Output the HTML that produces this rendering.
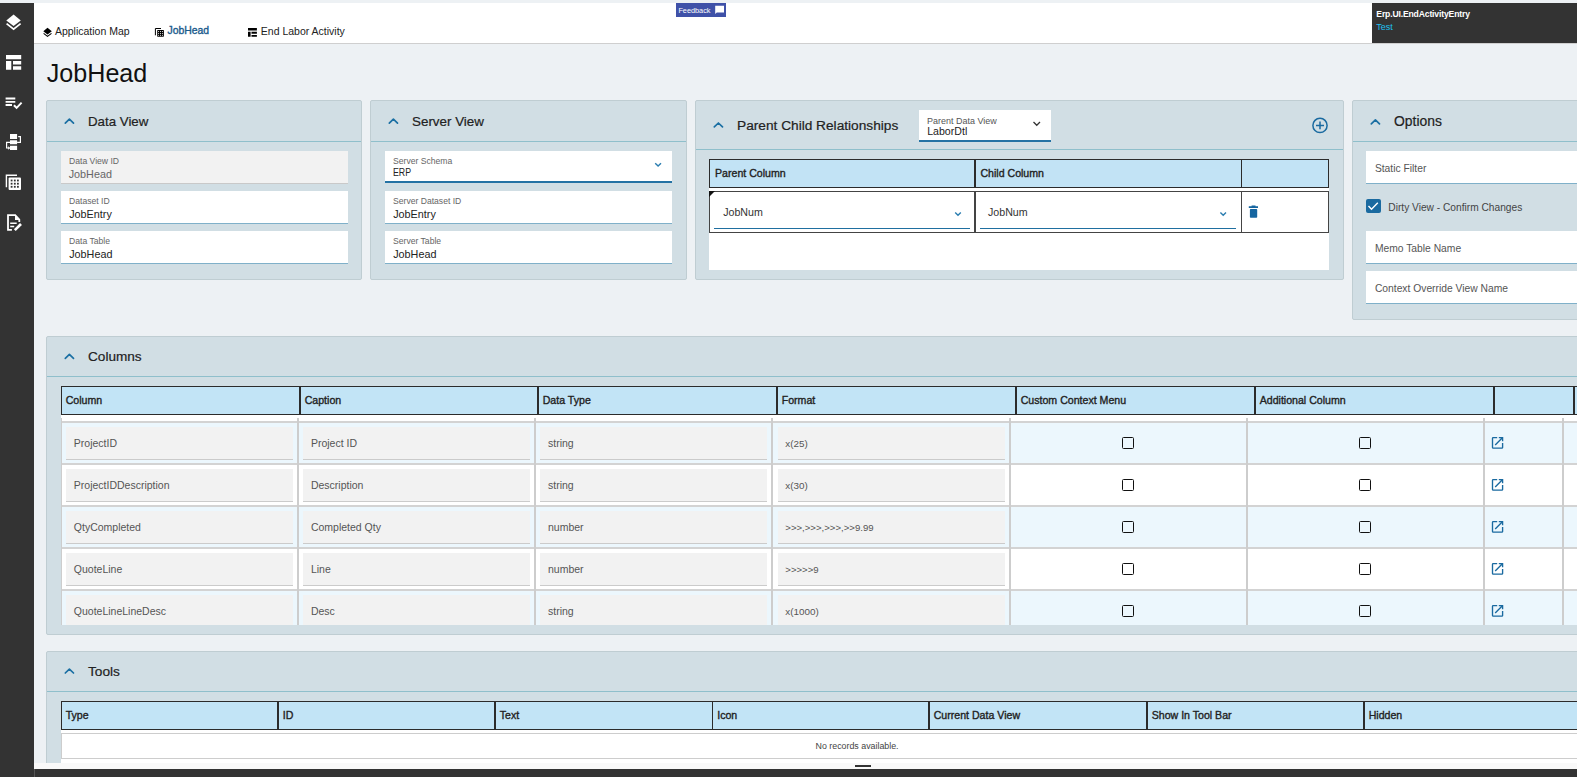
<!DOCTYPE html><html><head><meta charset="utf-8"><style>
html,body{margin:0;padding:0;}
body{width:1577px;height:777px;overflow:hidden;position:relative;background:#edf1f4;font-family:"Liberation Sans", sans-serif;}
.t{position:absolute;white-space:nowrap;}
.b{position:absolute;box-sizing:border-box;}
svg{position:absolute;overflow:visible;}
</style></head><body>
<div class="b" style="left:0px;top:3px;width:34px;height:774px;background:#333;"></div>
<div class="b" style="left:34px;top:3px;width:1543px;height:41px;background:#fff;border-bottom:1px solid #cfcfcf;"></div>
<div class="t" style="left:54.9px;top:26.01px;font-size:10.5px;line-height:10.5px;color:#222;font-weight:400;letter-spacing:0px;">Application Map</div>
<div class="t" style="left:167.5px;top:26.00px;font-size:10.4px;line-height:10.4px;color:#1a5a8c;font-weight:400;letter-spacing:0px;-webkit-text-stroke:0.35px currentColor;">JobHead</div>
<div class="t" style="left:260.8px;top:26.01px;font-size:10.5px;line-height:10.5px;color:#222;font-weight:400;letter-spacing:0px;">End Labor Activity</div>
<div class="b" style="left:676px;top:3px;width:50px;height:14px;background:#3f51a8;"></div>
<div class="t" style="left:678.4px;top:6.72px;font-size:7.3px;line-height:7.3px;color:#fff;font-weight:400;letter-spacing:0px;">Feedback</div>
<div class="b" style="left:1372px;top:3px;width:205px;height:40px;background:#333;"></div>
<div class="t" style="left:1376.3px;top:9.62px;font-size:8.6px;line-height:8.6px;color:#fff;font-weight:700;letter-spacing:-0.15px;">Erp.UI.EndActivityEntry</div>
<div class="t" style="left:1376.3px;top:23.28px;font-size:9.0px;line-height:9.0px;color:#1ec0f0;font-weight:400;letter-spacing:0px;">Test</div>
<div class="t" style="left:46.8px;top:61.25px;font-size:25.1px;line-height:25.1px;color:#111;font-weight:400;letter-spacing:0px;">JobHead</div>
<div class="b" style="left:46px;top:100px;width:316px;height:180px;background:#d1dee4;border:1px solid #bfcdd2;border-radius:2px;"></div>
<div class="b" style="left:47px;top:141px;width:314px;height:1px;background:#8fbfcb;"></div>
<svg style="left:0px;top:0px" width="1577" height="777" viewBox="0 0 1577 777"><polyline points="65.3,123.1 69.4,119.2 73.5,123.1" fill="none" stroke="#1a6fa3" stroke-width="1.7" stroke-linecap="round" stroke-linejoin="round"/></svg>
<div class="t" style="left:88.0px;top:115.04px;font-size:13.3px;line-height:13.3px;color:#222;font-weight:400;letter-spacing:0px;-webkit-text-stroke:0.2px #222;">Data View</div>
<div class="b" style="left:61px;top:151px;width:287px;height:33px;background:#f2f2f2;border-bottom:1px solid #c9c9c9;"></div>
<div class="t" style="left:68.7px;top:156.06px;font-size:9.5px;line-height:9.5px;color:#666;font-weight:400;letter-spacing:0px;transform:scaleX(0.905);transform-origin:0 0;">Data View ID</div>
<div class="t" style="left:68.7px;top:168.96px;font-size:10.8px;line-height:10.8px;color:#666;font-weight:400;letter-spacing:0px;">JobHead</div>
<div class="b" style="left:61px;top:191px;width:287px;height:33px;background:#fff;border-bottom:1px solid #7fb0c9;"></div>
<div class="t" style="left:69.2px;top:195.86px;font-size:9.5px;line-height:9.5px;color:#666;font-weight:400;letter-spacing:0px;transform:scaleX(0.905);transform-origin:0 0;">Dataset ID</div>
<div class="t" style="left:69.2px;top:208.86px;font-size:10.8px;line-height:10.8px;color:#222;font-weight:400;letter-spacing:0px;">JobEntry</div>
<div class="b" style="left:61px;top:231px;width:287px;height:33px;background:#fff;border-bottom:1px solid #7fb0c9;"></div>
<div class="t" style="left:69.2px;top:235.86px;font-size:9.5px;line-height:9.5px;color:#666;font-weight:400;letter-spacing:0px;transform:scaleX(0.905);transform-origin:0 0;">Data Table</div>
<div class="t" style="left:69.2px;top:248.86px;font-size:10.8px;line-height:10.8px;color:#222;font-weight:400;letter-spacing:0px;">JobHead</div>
<div class="b" style="left:370px;top:100px;width:317px;height:180px;background:#d1dee4;border:1px solid #bfcdd2;border-radius:2px;"></div>
<div class="b" style="left:371px;top:141px;width:315px;height:1px;background:#8fbfcb;"></div>
<svg style="left:0px;top:0px" width="1577" height="777" viewBox="0 0 1577 777"><polyline points="389.3,123.1 393.4,119.2 397.5,123.1" fill="none" stroke="#1a6fa3" stroke-width="1.7" stroke-linecap="round" stroke-linejoin="round"/></svg>
<div class="t" style="left:412.0px;top:114.96px;font-size:13.4px;line-height:13.4px;color:#222;font-weight:400;letter-spacing:0px;-webkit-text-stroke:0.2px #222;">Server View</div>
<div class="b" style="left:385px;top:151px;width:287px;height:32px;background:#fff;border-bottom:2px solid #2472a4;"></div>
<div class="t" style="left:393.2px;top:156.16px;font-size:9.5px;line-height:9.5px;color:#666;font-weight:400;letter-spacing:0px;transform:scaleX(0.905);transform-origin:0 0;">Server Schema</div>
<div class="t" style="left:393.2px;top:168.03px;font-size:10.0px;line-height:10.0px;color:#222;font-weight:400;letter-spacing:0px;transform:scaleX(0.88);transform-origin:0 0;">ERP</div>
<svg style="left:0px;top:0px" width="1577" height="777" viewBox="0 0 1577 777"><polyline points="655.2,163.2 658.1,166.1 661.0,163.2" fill="none" stroke="#2a7db0" stroke-width="1.4"/></svg>
<div class="b" style="left:385px;top:191px;width:287px;height:33px;background:#fff;border-bottom:1px solid #7fb0c9;"></div>
<div class="t" style="left:393.2px;top:195.86px;font-size:9.5px;line-height:9.5px;color:#666;font-weight:400;letter-spacing:0px;transform:scaleX(0.905);transform-origin:0 0;">Server Dataset ID</div>
<div class="t" style="left:393.2px;top:208.86px;font-size:10.8px;line-height:10.8px;color:#222;font-weight:400;letter-spacing:0px;">JobEntry</div>
<div class="b" style="left:385px;top:231px;width:287px;height:33px;background:#fff;border-bottom:1px solid #7fb0c9;"></div>
<div class="t" style="left:393.2px;top:235.86px;font-size:9.5px;line-height:9.5px;color:#666;font-weight:400;letter-spacing:0px;transform:scaleX(0.905);transform-origin:0 0;">Server Table</div>
<div class="t" style="left:393.2px;top:248.86px;font-size:10.8px;line-height:10.8px;color:#222;font-weight:400;letter-spacing:0px;">JobHead</div>
<div class="b" style="left:695px;top:100px;width:649px;height:180px;background:#d1dee4;border:1px solid #bfcdd2;border-radius:2px;"></div>
<div class="b" style="left:696px;top:149px;width:647px;height:1px;background:#8fbfcb;"></div>
<svg style="left:0px;top:0px" width="1577" height="777" viewBox="0 0 1577 777"><polyline points="714.3,126.9 718.4,123.0 722.5,126.9" fill="none" stroke="#1a6fa3" stroke-width="1.7" stroke-linecap="round" stroke-linejoin="round"/></svg>
<div class="t" style="left:737.0px;top:118.50px;font-size:13.7px;line-height:13.7px;color:#222;font-weight:400;letter-spacing:0px;-webkit-text-stroke:0.2px #222;">Parent Child Relationships</div>
<div class="b" style="left:919px;top:110px;width:132px;height:32px;background:#fff;border-bottom:2px solid #2472a4;"></div>
<div class="t" style="left:927.2px;top:115.69px;font-size:9.7px;line-height:9.7px;color:#555;font-weight:400;letter-spacing:0px;transform:scaleX(0.927);transform-origin:0 0;">Parent Data View</div>
<div class="t" style="left:927.2px;top:126.23px;font-size:10.6px;line-height:10.6px;color:#222;font-weight:400;letter-spacing:0px;">LaborDtl</div>
<svg style="left:0px;top:0px" width="1577" height="777" viewBox="0 0 1577 777"><polyline points="1033.5,122 1036.75,125.25 1040.0,122" fill="none" stroke="#333" stroke-width="1.3"/></svg>
<svg style="left:0px;top:0px" width="1577" height="777" viewBox="0 0 1577 777"><circle cx="1320" cy="125.4" r="7.1" fill="none" stroke="#1a6aa0" stroke-width="1.5"/><path d="M1316 125.4h8M1320 121.6v7.6" stroke="#1a6aa0" stroke-width="1.5"/></svg>
<div class="b" style="left:709px;top:188px;width:620px;height:82px;background:#fff;"></div>
<div class="b" style="left:709px;top:159px;width:620px;height:29px;background:#c2e3f5;border:1.2px solid #2b2b2b;"></div>
<div class="b" style="left:974px;top:159px;width:1.5px;height:29px;background:#2b2b2b;"></div>
<div class="b" style="left:1240.5px;top:159px;width:1.5px;height:29px;background:#2b2b2b;"></div>
<div class="t" style="left:715.0px;top:167.93px;font-size:10.6px;line-height:10.6px;color:#222;font-weight:400;letter-spacing:0px;-webkit-text-stroke:0.35px currentColor;">Parent Column</div>
<div class="t" style="left:980.4px;top:167.93px;font-size:10.6px;line-height:10.6px;color:#222;font-weight:400;letter-spacing:0px;-webkit-text-stroke:0.35px currentColor;">Child Column</div>
<div class="b" style="left:709px;top:191px;width:620px;height:42px;border:1.2px solid #444;"></div>
<div class="b" style="left:974px;top:191px;width:1.5px;height:42px;background:#444;"></div>
<div class="b" style="left:1240.5px;top:191px;width:1.5px;height:42px;background:#444;"></div>
<svg style="left:0px;top:0px" width="1577" height="777" viewBox="0 0 1577 777"><path d="M709 191h6l-6 6z" fill="#111"/></svg>
<div class="b" style="left:714px;top:228px;width:256px;height:1px;background:#1f6fa0;"></div>
<div class="t" style="left:723.2px;top:206.78px;font-size:10.65px;line-height:10.65px;color:#333;font-weight:400;letter-spacing:0px;">JobNum</div>
<svg style="left:0px;top:0px" width="1577" height="777" viewBox="0 0 1577 777"><polyline points="955.2,212.4 958.0,215.20000000000002 960.8000000000001,212.4" fill="none" stroke="#2a7db0" stroke-width="1.4"/></svg>
<div class="b" style="left:980px;top:228px;width:256px;height:1px;background:#1f6fa0;"></div>
<div class="t" style="left:988.0px;top:206.78px;font-size:10.65px;line-height:10.65px;color:#333;font-weight:400;letter-spacing:0px;">JobNum</div>
<svg style="left:0px;top:0px" width="1577" height="777" viewBox="0 0 1577 777"><polyline points="1220.4,212.4 1223.2,215.20000000000002 1226.0,212.4" fill="none" stroke="#2a7db0" stroke-width="1.4"/></svg>
<svg style="left:0px;top:0px" width="1577" height="777" viewBox="0 0 1577 777"><path d="M1248.8 206.3h9.2v1.6h-9.2z M1251.6 205.6h3.9v1.2h-3.9z" fill="#1565a0"/><rect x="1249.9" y="209" width="7.3" height="8.8" rx="0.8" fill="#1565a0"/></svg>
<div class="b" style="left:1352px;top:100px;width:240px;height:220px;background:#d1dee4;border:1px solid #bfcdd2;border-radius:2px;"></div>
<div class="b" style="left:1353px;top:141px;width:238px;height:1px;background:#8fbfcb;"></div>
<svg style="left:0px;top:0px" width="1577" height="777" viewBox="0 0 1577 777"><polyline points="1371.3,123.8 1375.4,119.9 1379.5,123.8" fill="none" stroke="#1a6fa3" stroke-width="1.7" stroke-linecap="round" stroke-linejoin="round"/></svg>
<div class="t" style="left:1394.0px;top:115.23px;font-size:13.9px;line-height:13.9px;color:#222;font-weight:400;letter-spacing:0px;-webkit-text-stroke:0.2px #222;">Options</div>
<div class="b" style="left:1366px;top:151px;width:240px;height:33px;background:#fff;border-bottom:1px solid #7fb0c9;"></div>
<div class="t" style="left:1374.9px;top:164.28px;font-size:10.3px;line-height:10.3px;color:#555;font-weight:400;letter-spacing:0px;">Static Filter</div>
<div class="b" style="left:1366px;top:199px;width:15px;height:14px;background:#1a6aa0;border-radius:2px;"></div>
<svg style="left:0px;top:0px" width="1577" height="777" viewBox="0 0 1577 777"><polyline points="1368.5,206 1371.5,209.2 1377.8,202.8" fill="none" stroke="#fff" stroke-width="1.4"/></svg>
<div class="t" style="left:1388.3px;top:202.57px;font-size:10.2px;line-height:10.2px;color:#444;font-weight:400;letter-spacing:0px;">Dirty View - Confirm Changes</div>
<div class="b" style="left:1366px;top:231px;width:240px;height:33px;background:#fff;border-bottom:1px solid #7fb0c9;"></div>
<div class="t" style="left:1374.9px;top:244.28px;font-size:10.3px;line-height:10.3px;color:#555;font-weight:400;letter-spacing:0px;">Memo Table Name</div>
<div class="b" style="left:1366px;top:271px;width:240px;height:33px;background:#fff;border-bottom:1px solid #7fb0c9;"></div>
<div class="t" style="left:1374.9px;top:284.28px;font-size:10.3px;line-height:10.3px;color:#555;font-weight:400;letter-spacing:0px;">Context Override View Name</div>
<div class="b" style="left:46px;top:336px;width:1560px;height:299px;background:#d1dee4;border:1px solid #bfcdd2;border-radius:2px;"></div>
<div class="b" style="left:47px;top:376px;width:1558px;height:1px;background:#8fbfcb;"></div>
<svg style="left:0px;top:0px" width="1577" height="777" viewBox="0 0 1577 777"><polyline points="65.3,358.3 69.4,354.4 73.5,358.3" fill="none" stroke="#1a6fa3" stroke-width="1.7" stroke-linecap="round" stroke-linejoin="round"/></svg>
<div class="t" style="left:88.0px;top:349.99px;font-size:13.6px;line-height:13.6px;color:#222;font-weight:400;letter-spacing:0px;-webkit-text-stroke:0.2px #222;">Columns</div>
<div class="b" style="left:61px;top:414px;width:1540px;height:211px;background:#fff;"></div>
<div class="b" style="left:61px;top:386px;width:1540px;height:29px;background:#c2e4f6;border-top:1.5px solid #2b2b2b;border-bottom:1.5px solid #2b2b2b;border-left:1.5px solid #2b2b2b;"></div>
<div class="b" style="left:299.25px;top:386px;width:1.5px;height:29px;background:#2b2b2b;"></div>
<div class="b" style="left:537.25px;top:386px;width:1.5px;height:29px;background:#2b2b2b;"></div>
<div class="b" style="left:776.25px;top:386px;width:1.5px;height:29px;background:#2b2b2b;"></div>
<div class="b" style="left:1015.25px;top:386px;width:1.5px;height:29px;background:#2b2b2b;"></div>
<div class="b" style="left:1254.25px;top:386px;width:1.5px;height:29px;background:#2b2b2b;"></div>
<div class="b" style="left:1493.25px;top:386px;width:1.5px;height:29px;background:#2b2b2b;"></div>
<div class="b" style="left:1573.25px;top:386px;width:1.5px;height:29px;background:#2b2b2b;"></div>
<div class="t" style="left:65.7px;top:395.43px;font-size:10.6px;line-height:10.6px;color:#222;font-weight:400;letter-spacing:0px;-webkit-text-stroke:0.35px currentColor;">Column</div>
<div class="t" style="left:304.7px;top:395.43px;font-size:10.6px;line-height:10.6px;color:#222;font-weight:400;letter-spacing:0px;-webkit-text-stroke:0.35px currentColor;">Caption</div>
<div class="t" style="left:542.7px;top:395.43px;font-size:10.6px;line-height:10.6px;color:#222;font-weight:400;letter-spacing:0px;-webkit-text-stroke:0.35px currentColor;">Data Type</div>
<div class="t" style="left:781.7px;top:395.43px;font-size:10.6px;line-height:10.6px;color:#222;font-weight:400;letter-spacing:0px;-webkit-text-stroke:0.35px currentColor;">Format</div>
<div class="t" style="left:1020.7px;top:395.43px;font-size:10.6px;line-height:10.6px;color:#222;font-weight:400;letter-spacing:0px;-webkit-text-stroke:0.35px currentColor;">Custom Context Menu</div>
<div class="t" style="left:1259.7px;top:395.43px;font-size:10.6px;line-height:10.6px;color:#222;font-weight:400;letter-spacing:0px;-webkit-text-stroke:0.35px currentColor;">Additional Column</div>
<div class="b" style="left:61px;top:421px;width:1540px;height:42px;background:#ecf7fd;border-top:2px solid #d3d3d3;"></div>
<div class="b" style="left:66px;top:427px;width:226.5px;height:33px;background:#f2f2f2;border-bottom:1.2px solid #cbcbcb;"></div>
<div class="t" style="left:73.8px;top:438.01px;font-size:10.5px;line-height:10.5px;color:#555;font-weight:400;letter-spacing:0px;">ProjectID</div>
<div class="b" style="left:303.09999999999997px;top:427px;width:226.50000000000006px;height:33px;background:#f2f2f2;border-bottom:1.2px solid #cbcbcb;"></div>
<div class="t" style="left:310.9px;top:438.01px;font-size:10.5px;line-height:10.5px;color:#555;font-weight:400;letter-spacing:0px;">Project ID</div>
<div class="b" style="left:540.2px;top:427px;width:226.69999999999993px;height:33px;background:#f2f2f2;border-bottom:1.2px solid #cbcbcb;"></div>
<div class="t" style="left:548.0px;top:438.01px;font-size:10.5px;line-height:10.5px;color:#555;font-weight:400;letter-spacing:0px;">string</div>
<div class="b" style="left:777.5px;top:427px;width:227.39999999999998px;height:33px;background:#f2f2f2;border-bottom:1.2px solid #cbcbcb;"></div>
<div class="t" style="left:785.3px;top:438.52px;font-size:9.9px;line-height:9.9px;color:#555;font-weight:400;letter-spacing:0px;">x(25)</div>
<div class="b" style="left:1122.0500000000002px;top:437px;width:12.2px;height:12.2px;border:1.4px solid #111;border-radius:1.5px;"></div>
<div class="b" style="left:1358.9px;top:437px;width:12.2px;height:12.2px;border:1.4px solid #111;border-radius:1.5px;"></div>
<svg style="left:0px;top:0px" width="1577" height="777" viewBox="0 0 1577 777"><path d="M1497.2 437.6H1493.2Q1492.5 437.6 1492.5 438.3V447.4Q1492.5 448.1 1493.2 448.1H1501.9Q1502.6 448.1 1502.6 447.4V442.9" fill="none" stroke="#1a6aa0" stroke-width="1.35"/><path d="M1498.8 437.6H1502.6V441.3M1502.4 437.8L1495.2 445.0" fill="none" stroke="#1a6aa0" stroke-width="1.35"/></svg>
<div class="b" style="left:61px;top:463px;width:1540px;height:42px;background:#fff;border-top:2px solid #d3d3d3;"></div>
<div class="b" style="left:66px;top:469px;width:226.5px;height:33px;background:#f2f2f2;border-bottom:1.2px solid #cbcbcb;"></div>
<div class="t" style="left:73.8px;top:480.01px;font-size:10.5px;line-height:10.5px;color:#555;font-weight:400;letter-spacing:0px;">ProjectIDDescription</div>
<div class="b" style="left:303.09999999999997px;top:469px;width:226.50000000000006px;height:33px;background:#f2f2f2;border-bottom:1.2px solid #cbcbcb;"></div>
<div class="t" style="left:310.9px;top:480.01px;font-size:10.5px;line-height:10.5px;color:#555;font-weight:400;letter-spacing:0px;">Description</div>
<div class="b" style="left:540.2px;top:469px;width:226.69999999999993px;height:33px;background:#f2f2f2;border-bottom:1.2px solid #cbcbcb;"></div>
<div class="t" style="left:548.0px;top:480.01px;font-size:10.5px;line-height:10.5px;color:#555;font-weight:400;letter-spacing:0px;">string</div>
<div class="b" style="left:777.5px;top:469px;width:227.39999999999998px;height:33px;background:#f2f2f2;border-bottom:1.2px solid #cbcbcb;"></div>
<div class="t" style="left:785.3px;top:480.52px;font-size:9.9px;line-height:9.9px;color:#555;font-weight:400;letter-spacing:0px;">x(30)</div>
<div class="b" style="left:1122.0500000000002px;top:479px;width:12.2px;height:12.2px;border:1.4px solid #111;border-radius:1.5px;"></div>
<div class="b" style="left:1358.9px;top:479px;width:12.2px;height:12.2px;border:1.4px solid #111;border-radius:1.5px;"></div>
<svg style="left:0px;top:0px" width="1577" height="777" viewBox="0 0 1577 777"><path d="M1497.2 479.6H1493.2Q1492.5 479.6 1492.5 480.3V489.4Q1492.5 490.1 1493.2 490.1H1501.9Q1502.6 490.1 1502.6 489.4V484.9" fill="none" stroke="#1a6aa0" stroke-width="1.35"/><path d="M1498.8 479.6H1502.6V483.3M1502.4 479.8L1495.2 487.0" fill="none" stroke="#1a6aa0" stroke-width="1.35"/></svg>
<div class="b" style="left:61px;top:505px;width:1540px;height:42px;background:#ecf7fd;border-top:2px solid #d3d3d3;"></div>
<div class="b" style="left:66px;top:511px;width:226.5px;height:33px;background:#f2f2f2;border-bottom:1.2px solid #cbcbcb;"></div>
<div class="t" style="left:73.8px;top:522.01px;font-size:10.5px;line-height:10.5px;color:#555;font-weight:400;letter-spacing:0px;">QtyCompleted</div>
<div class="b" style="left:303.09999999999997px;top:511px;width:226.50000000000006px;height:33px;background:#f2f2f2;border-bottom:1.2px solid #cbcbcb;"></div>
<div class="t" style="left:310.9px;top:522.01px;font-size:10.5px;line-height:10.5px;color:#555;font-weight:400;letter-spacing:0px;">Completed Qty</div>
<div class="b" style="left:540.2px;top:511px;width:226.69999999999993px;height:33px;background:#f2f2f2;border-bottom:1.2px solid #cbcbcb;"></div>
<div class="t" style="left:548.0px;top:522.01px;font-size:10.5px;line-height:10.5px;color:#555;font-weight:400;letter-spacing:0px;">number</div>
<div class="b" style="left:777.5px;top:511px;width:227.39999999999998px;height:33px;background:#f2f2f2;border-bottom:1.2px solid #cbcbcb;"></div>
<div class="t" style="left:785.3px;top:522.77px;font-size:9.6px;line-height:9.6px;color:#555;font-weight:400;letter-spacing:0px;">&gt;&gt;&gt;,&gt;&gt;&gt;,&gt;&gt;&gt;,&gt;&gt;9.99</div>
<div class="b" style="left:1122.0500000000002px;top:521px;width:12.2px;height:12.2px;border:1.4px solid #111;border-radius:1.5px;"></div>
<div class="b" style="left:1358.9px;top:521px;width:12.2px;height:12.2px;border:1.4px solid #111;border-radius:1.5px;"></div>
<svg style="left:0px;top:0px" width="1577" height="777" viewBox="0 0 1577 777"><path d="M1497.2 521.6H1493.2Q1492.5 521.6 1492.5 522.3V531.4Q1492.5 532.1 1493.2 532.1H1501.9Q1502.6 532.1 1502.6 531.4V526.9" fill="none" stroke="#1a6aa0" stroke-width="1.35"/><path d="M1498.8 521.6H1502.6V525.3M1502.4 521.8L1495.2 529.0" fill="none" stroke="#1a6aa0" stroke-width="1.35"/></svg>
<div class="b" style="left:61px;top:547px;width:1540px;height:42px;background:#fff;border-top:2px solid #d3d3d3;"></div>
<div class="b" style="left:66px;top:553px;width:226.5px;height:33px;background:#f2f2f2;border-bottom:1.2px solid #cbcbcb;"></div>
<div class="t" style="left:73.8px;top:564.01px;font-size:10.5px;line-height:10.5px;color:#555;font-weight:400;letter-spacing:0px;">QuoteLine</div>
<div class="b" style="left:303.09999999999997px;top:553px;width:226.50000000000006px;height:33px;background:#f2f2f2;border-bottom:1.2px solid #cbcbcb;"></div>
<div class="t" style="left:310.9px;top:564.01px;font-size:10.5px;line-height:10.5px;color:#555;font-weight:400;letter-spacing:0px;">Line</div>
<div class="b" style="left:540.2px;top:553px;width:226.69999999999993px;height:33px;background:#f2f2f2;border-bottom:1.2px solid #cbcbcb;"></div>
<div class="t" style="left:548.0px;top:564.01px;font-size:10.5px;line-height:10.5px;color:#555;font-weight:400;letter-spacing:0px;">number</div>
<div class="b" style="left:777.5px;top:553px;width:227.39999999999998px;height:33px;background:#f2f2f2;border-bottom:1.2px solid #cbcbcb;"></div>
<div class="t" style="left:785.3px;top:564.77px;font-size:9.6px;line-height:9.6px;color:#555;font-weight:400;letter-spacing:0px;">&gt;&gt;&gt;&gt;&gt;9</div>
<div class="b" style="left:1122.0500000000002px;top:563px;width:12.2px;height:12.2px;border:1.4px solid #111;border-radius:1.5px;"></div>
<div class="b" style="left:1358.9px;top:563px;width:12.2px;height:12.2px;border:1.4px solid #111;border-radius:1.5px;"></div>
<svg style="left:0px;top:0px" width="1577" height="777" viewBox="0 0 1577 777"><path d="M1497.2 563.6H1493.2Q1492.5 563.6 1492.5 564.3V573.4Q1492.5 574.1 1493.2 574.1H1501.9Q1502.6 574.1 1502.6 573.4V568.9" fill="none" stroke="#1a6aa0" stroke-width="1.35"/><path d="M1498.8 563.6H1502.6V567.3M1502.4 563.8L1495.2 571.0" fill="none" stroke="#1a6aa0" stroke-width="1.35"/></svg>
<div class="b" style="left:61px;top:589px;width:1540px;height:36px;background:#ecf7fd;border-top:2px solid #d3d3d3;"></div>
<div class="b" style="left:66px;top:595px;width:226.5px;height:30px;background:#f2f2f2;"></div>
<div class="t" style="left:73.8px;top:606.01px;font-size:10.5px;line-height:10.5px;color:#555;font-weight:400;letter-spacing:0px;">QuoteLineLineDesc</div>
<div class="b" style="left:303.09999999999997px;top:595px;width:226.50000000000006px;height:30px;background:#f2f2f2;"></div>
<div class="t" style="left:310.9px;top:606.01px;font-size:10.5px;line-height:10.5px;color:#555;font-weight:400;letter-spacing:0px;">Desc</div>
<div class="b" style="left:540.2px;top:595px;width:226.69999999999993px;height:30px;background:#f2f2f2;"></div>
<div class="t" style="left:548.0px;top:606.01px;font-size:10.5px;line-height:10.5px;color:#555;font-weight:400;letter-spacing:0px;">string</div>
<div class="b" style="left:777.5px;top:595px;width:227.39999999999998px;height:30px;background:#f2f2f2;"></div>
<div class="t" style="left:785.3px;top:606.52px;font-size:9.9px;line-height:9.9px;color:#555;font-weight:400;letter-spacing:0px;">x(1000)</div>
<div class="b" style="left:1122.0500000000002px;top:605px;width:12.2px;height:12.2px;border:1.4px solid #111;border-radius:1.5px;"></div>
<div class="b" style="left:1358.9px;top:605px;width:12.2px;height:12.2px;border:1.4px solid #111;border-radius:1.5px;"></div>
<svg style="left:0px;top:0px" width="1577" height="777" viewBox="0 0 1577 777"><path d="M1497.2 605.6H1493.2Q1492.5 605.6 1492.5 606.3V615.4Q1492.5 616.1 1493.2 616.1H1501.9Q1502.6 616.1 1502.6 615.4V610.9" fill="none" stroke="#1a6aa0" stroke-width="1.35"/><path d="M1498.8 605.6H1502.6V609.3M1502.4 605.8L1495.2 613.0" fill="none" stroke="#1a6aa0" stroke-width="1.35"/></svg>
<div class="b" style="left:61px;top:418px;width:1.2px;height:207px;background:#cdcdcd;"></div>
<div class="b" style="left:296.9px;top:418px;width:2px;height:207px;background:#cdcdcd;"></div>
<div class="b" style="left:534.0px;top:418px;width:2px;height:207px;background:#cdcdcd;"></div>
<div class="b" style="left:771.3px;top:418px;width:2px;height:207px;background:#cdcdcd;"></div>
<div class="b" style="left:1009.3px;top:418px;width:2px;height:207px;background:#cdcdcd;"></div>
<div class="b" style="left:1246.0px;top:418px;width:2px;height:207px;background:#cdcdcd;"></div>
<div class="b" style="left:1483.0px;top:418px;width:2px;height:207px;background:#cdcdcd;"></div>
<div class="b" style="left:1561.7px;top:418px;width:2px;height:207px;background:#cdcdcd;"></div>
<div class="b" style="left:46px;top:651px;width:1560px;height:140px;background:#d1dee4;border:1px solid #bfcdd2;border-radius:2px;"></div>
<div class="b" style="left:47px;top:691px;width:1558px;height:1px;background:#8fbfcb;"></div>
<svg style="left:0px;top:0px" width="1577" height="777" viewBox="0 0 1577 777"><polyline points="65.3,673.0 69.4,669.1 73.5,673.0" fill="none" stroke="#1a6fa3" stroke-width="1.7" stroke-linecap="round" stroke-linejoin="round"/></svg>
<div class="t" style="left:88.0px;top:664.60px;font-size:13.7px;line-height:13.7px;color:#222;font-weight:400;letter-spacing:0px;-webkit-text-stroke:0.2px #222;">Tools</div>
<div class="b" style="left:61px;top:729px;width:1540px;height:34px;background:#fff;"></div>
<div class="b" style="left:61px;top:701px;width:1540px;height:29px;background:#c2e4f6;border-top:1.5px solid #2b2b2b;border-bottom:1.5px solid #2b2b2b;border-left:1.5px solid #2b2b2b;"></div>
<div class="b" style="left:277.25px;top:701px;width:1.5px;height:29px;background:#2b2b2b;"></div>
<div class="b" style="left:494.25px;top:701px;width:1.5px;height:29px;background:#2b2b2b;"></div>
<div class="b" style="left:711.75px;top:701px;width:1.5px;height:29px;background:#2b2b2b;"></div>
<div class="b" style="left:928.25px;top:701px;width:1.5px;height:29px;background:#2b2b2b;"></div>
<div class="b" style="left:1146.25px;top:701px;width:1.5px;height:29px;background:#2b2b2b;"></div>
<div class="b" style="left:1363.25px;top:701px;width:1.5px;height:29px;background:#2b2b2b;"></div>
<div class="t" style="left:65.7px;top:710.43px;font-size:10.6px;line-height:10.6px;color:#222;font-weight:400;letter-spacing:0px;-webkit-text-stroke:0.35px currentColor;">Type</div>
<div class="t" style="left:282.7px;top:710.43px;font-size:10.6px;line-height:10.6px;color:#222;font-weight:400;letter-spacing:0px;-webkit-text-stroke:0.35px currentColor;">ID</div>
<div class="t" style="left:499.7px;top:710.43px;font-size:10.6px;line-height:10.6px;color:#222;font-weight:400;letter-spacing:0px;-webkit-text-stroke:0.35px currentColor;">Text</div>
<div class="t" style="left:717.2px;top:710.43px;font-size:10.6px;line-height:10.6px;color:#222;font-weight:400;letter-spacing:0px;-webkit-text-stroke:0.35px currentColor;">Icon</div>
<div class="t" style="left:933.7px;top:710.43px;font-size:10.6px;line-height:10.6px;color:#222;font-weight:400;letter-spacing:0px;-webkit-text-stroke:0.35px currentColor;">Current Data View</div>
<div class="t" style="left:1151.7px;top:710.43px;font-size:10.6px;line-height:10.6px;color:#222;font-weight:400;letter-spacing:0px;-webkit-text-stroke:0.35px currentColor;">Show In Tool Bar</div>
<div class="t" style="left:1368.7px;top:710.43px;font-size:10.6px;line-height:10.6px;color:#222;font-weight:400;letter-spacing:0px;-webkit-text-stroke:0.35px currentColor;">Hidden</div>
<div class="b" style="left:61px;top:733px;width:1540px;height:26px;border-top:1.5px solid #cdcdcd;border-bottom:1px solid #cdcdcd;border-left:1px solid #cdcdcd;"></div>
<div class="t" style="left:815.5px;top:741.60px;font-size:8.86px;line-height:8.86px;color:#444;font-weight:400;letter-spacing:0px;">No records available.</div>
<div class="b" style="left:34px;top:763px;width:1543px;height:6px;background:#f9f9f9;"></div>
<div class="b" style="left:855px;top:765px;width:16px;height:2px;background:#333;"></div>
<div class="b" style="left:34px;top:769px;width:1543px;height:8px;background:#333;border-left:1px solid #555;"></div>
<svg style="left:0px;top:0px" width="1577" height="777" viewBox="0 0 1577 777"><path d="M13.6 14.6L20.8 20.4L13.6 26.1L6.3 20.4Z" fill="#fff"/><polyline points="6.6,23.6 13.6,29.1 20.6,23.6" fill="none" stroke="#fff" stroke-width="1.8"/></svg>
<svg style="left:0px;top:0px" width="1577" height="777" viewBox="0 0 1577 777"><path d="M6 55h15.2v4.2H6z M6 61h5.3v8.8H6z M13 61h8.2v3.6H13z M13 66.2h8.2v3.6H13z" fill="#fff"/></svg>
<svg style="left:0px;top:0px" width="1577" height="777" viewBox="0 0 1577 777"><path d="M5.6 98.5h9.7 M5.6 101.8h9.7 M5.6 105h6.4" stroke="#fff" stroke-width="1.8" fill="none"/><polyline points="13.9,105.2 16.6,107.8 21.6,102.6" fill="none" stroke="#fff" stroke-width="1.9"/></svg>
<svg style="left:0px;top:0px" width="1577" height="777" viewBox="0 0 1577 777"><path d="M10 134h7.1v5H10z M10 140.2h7.1v4H10z M10 145.8h7.1v4.3H10z" fill="#fff"/><polyline points="18.2,136.6 20.4,136.6 20.4,142.3 17.1,142.3" fill="none" stroke="#fff" stroke-width="1.2"/><polyline points="10,142.3 6.6,142.3 6.6,148 9.2,148" fill="none" stroke="#fff" stroke-width="1.2"/><path d="M8.2 146.2l2.2 1.8-2.2 1.8z" fill="#fff"/></svg>
<svg style="left:0px;top:0px" width="1577" height="777" viewBox="0 0 1577 777"><polyline points="6.4,187.3 6.4,175.3 17,175.3" fill="none" stroke="#fff" stroke-width="1.4"/><rect x="8.6" y="177.4" width="12.4" height="12.5" rx="1" fill="#fff"/><rect x="10.7" y="179.6" width="1.8" height="1.8" fill="#333"/><rect x="10.7" y="182.8" width="1.8" height="1.8" fill="#333"/><rect x="10.7" y="185.9" width="1.8" height="1.8" fill="#333"/><rect x="13.9" y="179.6" width="1.8" height="1.8" fill="#333"/><rect x="13.9" y="182.8" width="1.8" height="1.8" fill="#333"/><rect x="13.9" y="185.9" width="1.8" height="1.8" fill="#333"/><rect x="17.0" y="179.6" width="1.8" height="1.8" fill="#333"/><rect x="17.0" y="182.8" width="1.8" height="1.8" fill="#333"/><rect x="17.0" y="185.9" width="1.8" height="1.8" fill="#333"/></svg>
<svg style="left:0px;top:0px" width="1577" height="777" viewBox="0 0 1577 777"><path d="M11.9 229.8H8V215.2h7.2l4.1 4.3v2.4" fill="none" stroke="#fff" stroke-width="1.8"/><path d="M15 214.4l4.9 5.6H15z" fill="#fff"/><path d="M10.2 223.3h6.5 M10.2 226.5h4" stroke="#fff" stroke-width="1.5"/><path d="M14.8 230.2l6.2-6.2" stroke="#fff" stroke-width="2.6"/></svg>
<svg style="left:0px;top:0px" width="1577" height="777" viewBox="0 0 1577 777"><path d="M47.5 27.8L51.8 31.2L47.5 34.4L43.3 31.2Z" fill="#000"/><polyline points="43.6,33.4 47.5,36.4 51.5,33.4" fill="none" stroke="#000" stroke-width="1.1"/></svg>
<svg style="left:0px;top:0px" width="1577" height="777" viewBox="0 0 1577 777"><polyline points="155.4,35.3 155.4,28.5 161,28.5" fill="none" stroke="#000" stroke-width="1"/><rect x="157.2" y="30" width="6.7" height="6.7" rx="0.6" fill="#000"/><rect x="158.15" y="31.05" width="0.9" height="0.9" fill="#fff"/><rect x="158.15" y="32.95" width="0.9" height="0.9" fill="#fff"/><rect x="158.15" y="34.85" width="0.9" height="0.9" fill="#fff"/><rect x="160.05" y="31.05" width="0.9" height="0.9" fill="#fff"/><rect x="160.05" y="32.95" width="0.9" height="0.9" fill="#fff"/><rect x="160.05" y="34.85" width="0.9" height="0.9" fill="#fff"/><rect x="161.95" y="31.05" width="0.9" height="0.9" fill="#fff"/><rect x="161.95" y="32.95" width="0.9" height="0.9" fill="#fff"/><rect x="161.95" y="34.85" width="0.9" height="0.9" fill="#fff"/></svg>
<svg style="left:0px;top:0px" width="1577" height="777" viewBox="0 0 1577 777"><path d="M248 28h8.9v2.6H248z M248 31.8h2.6v5H248z M251.5 31.8h5.4v1.9h-5.4z M251.5 34.9h5.4v1.9h-5.4z" fill="#000"/></svg>
<svg style="left:0px;top:0px" width="1577" height="777" viewBox="0 0 1577 777"><path d="M715.2 5.8h8.8v6.6h-7.2l-1.6 1.6z" fill="#fff"/></svg>
</body></html>
